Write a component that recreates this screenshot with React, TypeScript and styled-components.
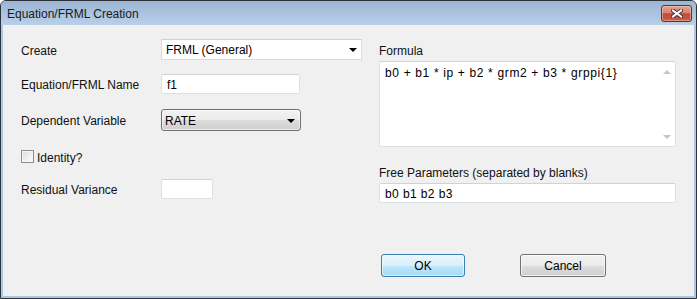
import React from "react";
import styled, { createGlobalStyle } from "styled-components";

const GlobalStyle = createGlobalStyle`
  html, body {
    margin: 0;
    padding: 0;
    background: #ffffff;
  }
  body {
    font-family: "Liberation Sans", Arial, sans-serif;
    font-size: 12px;
    color: #000000;
  }
  * {
    box-sizing: border-box;
  }
`;

const App: React.FC = () => {
  return (
    <>
      <GlobalStyle />
      <Window>
        <TitleBar>
          <Title>Equation/FRML Creation</Title>
          <CloseButton aria-label="Close">
            <svg width="12" height="9" viewBox="0 0 12 9">
              <path d="M2 1.5 L10 7.5 M10 1.5 L2 7.5" stroke="#4a3434" strokeWidth="4" strokeLinecap="square" />
              <path d="M2 1.5 L10 7.5 M10 1.5 L2 7.5" stroke="#ffffff" strokeWidth="2" strokeLinecap="square" />
            </svg>
          </CloseButton>
        </TitleBar>

        <Client>
          <LeftColumn>
            <FieldRow $mt={0} $h={21}>
              <Label>Create</Label>
              <FlatCombo>
                <FieldText>FRML (General)</FieldText>
                <Caret />
              </FlatCombo>
            </FieldRow>

            <FieldRow $mt={14} $h={20}>
              <Label>Equation/FRML Name</Label>
              <TextBox $w={139}>
                <FieldText>f1</FieldText>
              </TextBox>
            </FieldRow>

            <FieldRow $mt={15} $h={22}>
              <Label>Dependent Variable</Label>
              <ButtonCombo>
                <FieldText>RATE</FieldText>
                <Caret />
              </ButtonCombo>
            </FieldRow>

            <CheckRow>
              <CheckBox />
              <Label>Identity?</Label>
            </CheckRow>

            <FieldRow $mt={16} $h={20}>
              <Label>Residual Variance</Label>
              <TextBox $w={52} />
            </FieldRow>
          </LeftColumn>

          <RightColumn>
            <Label>Formula</Label>
            <FormulaBox>
              <FormulaText>b0 + b1 * ip + b2 * grm2 + b3 * grppi{"{1}"}</FormulaText>
              <ScrollTrack>
                <ScrollArrow $up />
                <ScrollArrow />
              </ScrollTrack>
            </FormulaBox>

            <Label $mt={16}>Free Parameters (separated by blanks)</Label>
            <ParamBox>
              <FieldText $spacing={0.4}>b0 b1 b2 b3</FieldText>
            </ParamBox>

            <ButtonRow>
              <PushButton $w={84} $default>OK</PushButton>
              <PushButton $w={86}>Cancel</PushButton>
            </ButtonRow>
          </RightColumn>
        </Client>
      </Window>
    </>
  );
};

export default App;

const Window = styled.div`
  width: 697px;
  height: 299px;
  display: flex;
  flex-direction: column;
  border: 1px solid #2f3236;
  border-radius: 6px 6px 0 0;
  background: #a9c9e8;
  overflow: hidden;
`;

const TitleBar = styled.div`
  height: 24px;
  flex: 0 0 24px;
  display: flex;
  align-items: center;
  justify-content: space-between;
  padding: 0 4px 0 6px;
  background: linear-gradient(#9cb5d3 0%, #a9c2de 50%, #b9d0e9 100%);
`;

const Title = styled.span`
  font-size: 12px;
  color: #1a1a1a;
  padding-top: 2px;
`;

const CloseButton = styled.div`
  width: 31px;
  height: 17px;
  display: flex;
  align-items: center;
  justify-content: center;
  border: 1px solid #6a2c28;
  border-radius: 3px;
  background: linear-gradient(#e2a597 0%, #d6826f 45%, #c24a36 52%, #cb5c45 100%);
  box-shadow: inset 0 0 0 1px rgba(255, 220, 210, 0.45);
`;

const Client = styled.div`
  flex: 1;
  margin: 0 2px 2px 2px;
  background: #f0f0f0;
  display: grid;
  grid-template-columns: 358px 297px;
  align-items: start;
  padding: 14px 0 0 18px;
`;

const LeftColumn = styled.div`
  display: flex;
  flex-direction: column;
`;

const RightColumn = styled.div`
  display: flex;
  flex-direction: column;
  padding-top: 2px;
`;

const FieldRow = styled.div<{ $mt: number; $h: number }>`
  display: grid;
  grid-template-columns: 140px auto;
  align-items: center;
  margin-top: ${(p) => p.$mt}px;
  height: ${(p) => p.$h}px;
`;

const Label = styled.span<{ $mt?: number }>`
  display: block;
  line-height: 15px;
  padding-top: 3px;
  color: #111111;
  margin-top: ${(p) => p.$mt ?? 0}px;
  white-space: nowrap;
`;

const FieldText = styled.span<{ $spacing?: number }>`
  display: block;
  line-height: 15px;
  padding-top: 2px;
  letter-spacing: ${(p) => p.$spacing ?? 0}px;
  white-space: nowrap;
`;

const FlatCombo = styled.div`
  width: 201px;
  height: 21px;
  display: flex;
  align-items: center;
  justify-content: space-between;
  padding: 0 4px 0 4px;
  background: #ffffff;
  border: 1px solid #dcdcdc;
  border-top-color: #d0d0d0;
`;

const ButtonCombo = styled.div`
  width: 140px;
  height: 22px;
  display: flex;
  align-items: center;
  justify-content: space-between;
  padding: 0 5px 0 3px;
  border: 1px solid #707070;
  border-radius: 3px;
  background: linear-gradient(#f2f2f2 0%, #ebebeb 50%, #dddddd 51%, #cfcfcf 100%);
  box-shadow: inset 0 0 0 1px rgba(255, 255, 255, 0.6);
`;

const Caret = styled.span`
  width: 0;
  height: 0;
  margin-top: 1px;
  border-left: 4px solid transparent;
  border-right: 4px solid transparent;
  border-top: 4px solid #000000;
`;

const TextBox = styled.div<{ $w: number }>`
  width: ${(p) => p.$w}px;
  height: 20px;
  display: flex;
  align-items: center;
  padding-left: 5px;
  background: #ffffff;
  border: 1px solid #dcdfe4;
  border-top-color: #cfd2d7;
  border-radius: 2px;
`;

const CheckRow = styled.div`
  display: flex;
  align-items: center;
  gap: 3px;
  margin-top: 19px;
  height: 13px;
`;

const CheckBox = styled.span`
  width: 13px;
  height: 13px;
  border: 1px solid #8f8f8f;
  background: linear-gradient(135deg, #dcdcdc 0%, #f4f4f4 70%, #ffffff 100%);
  box-shadow: inset 0 0 0 1px #f4f4f4;
`;

const FormulaBox = styled.div`
  margin-top: 2px;
  width: 297px;
  height: 86px;
  display: flex;
  background: #ffffff;
  border: 1px solid #dcdfe4;
  border-top-color: #cfd2d7;
  border-radius: 2px;
`;

const FormulaText = styled.div`
  flex: 1;
  padding: 4px 0 0 5px;
  line-height: 15px;
  letter-spacing: 0.65px;
  white-space: nowrap;
`;

const ScrollTrack = styled.div`
  width: 17px;
  display: flex;
  flex-direction: column;
  align-items: center;
  justify-content: space-between;
  padding: 8px 0 7px;
`;

const ScrollArrow = styled.span<{ $up?: boolean }>`
  width: 0;
  height: 0;
  border-left: 4px solid transparent;
  border-right: 4px solid transparent;
  ${(p) =>
    p.$up ? "border-bottom: 4px solid #c4c4c4;" : "border-top: 4px solid #c4c4c4;"}
`;

const ParamBox = styled.div`
  margin-top: 2px;
  width: 297px;
  height: 20px;
  display: flex;
  align-items: center;
  padding-left: 5px;
  background: #ffffff;
  border: 1px solid #dcdfe4;
  border-top-color: #cfd2d7;
  border-radius: 2px;
`;

const ButtonRow = styled.div`
  display: flex;
  gap: 55px;
  margin: 51px 0 0 2px;
`;

const PushButton = styled.div<{ $w: number; $default?: boolean }>`
  width: ${(p) => p.$w}px;
  height: 23px;
  display: flex;
  align-items: center;
  justify-content: center;
  padding-top: 1px;
  border-radius: 3px;
  border: 1px solid ${(p) => (p.$default ? "#3c7fb1" : "#707070")};
  background: ${(p) =>
    p.$default
      ? "linear-gradient(#eaf6fd 0%, #d9f0fc 50%, #bee6fd 51%, #a7d9f5 100%)"
      : "linear-gradient(#f2f2f2 0%, #ebebeb 50%, #dddddd 51%, #cfcfcf 100%)"};
  box-shadow: inset 0 0 0 1px
    ${(p) => (p.$default ? "rgba(255, 255, 255, 0.55)" : "rgba(255, 255, 255, 0.7)")};
  color: #000000;
`;
